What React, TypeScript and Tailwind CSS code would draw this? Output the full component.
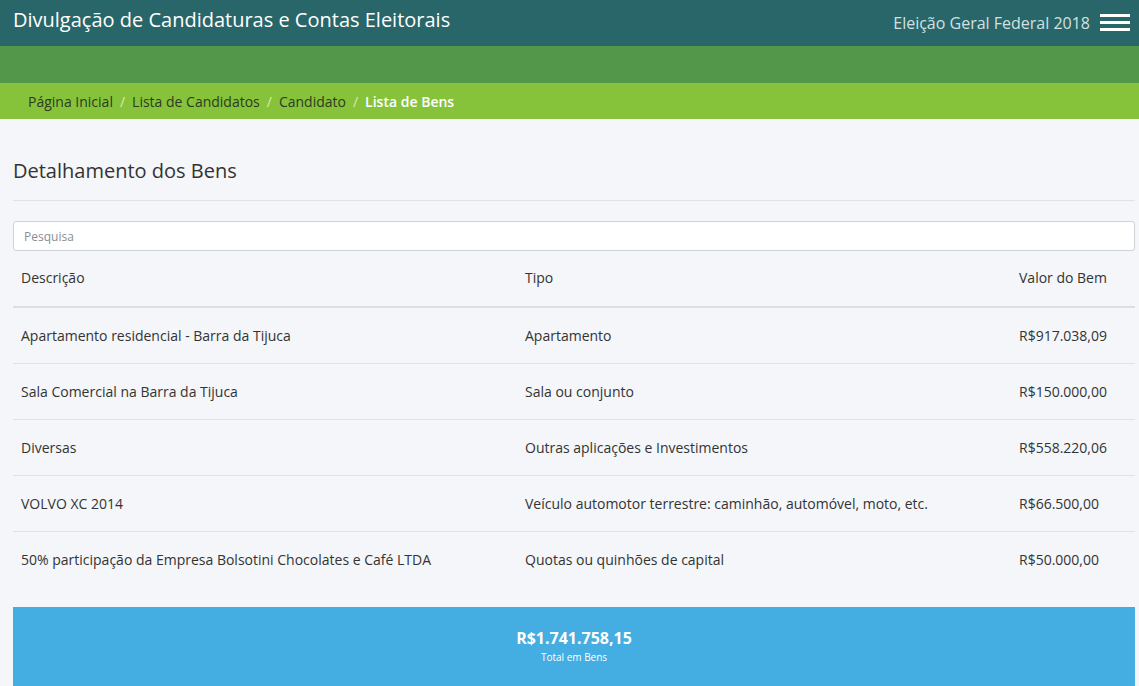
const bens = [
  { descricao: "Apartamento residencial - Barra da Tijuca", tipo: "Apartamento", valor: "R$917.038,09" },
  { descricao: "Sala Comercial na Barra da Tijuca", tipo: "Sala ou conjunto", valor: "R$150.000,00" },
  { descricao: "Diversas", tipo: "Outras aplicações e Investimentos", valor: "R$558.220,06" },
  { descricao: "VOLVO XC 2014", tipo: "Veículo automotor terrestre: caminhão, automóvel, moto, etc.", valor: "R$66.500,00" },
  { descricao: "50% participação da Empresa Bolsotini Chocolates e Café LTDA", tipo: "Quotas ou quinhões de capital", valor: "R$50.000,00" },
];

export default function App() {
  return (
    <div className="min-h-[686px] bg-[#f4f6f9] font-['Open_Sans',sans-serif] text-[#333]">
      {/* Top bar */}
      <header className="h-[46px] bg-[#28666a] flex items-center justify-between pl-[13px] pr-[9px]">
        <h1 className="text-[20px] text-white leading-none -mt-[6px]">
          Divulgação de Candidaturas e Contas Eleitorais
        </h1>
        <div className="flex items-center gap-[10px]">
          <span className="text-[16px] text-[#d3e0e0]">Eleição Geral Federal 2018</span>
          <div className="flex flex-col gap-[4px] -mt-[2px]">
            <span className="block w-[30px] h-[3px] bg-white" />
            <span className="block w-[30px] h-[3px] bg-white" />
            <span className="block w-[30px] h-[3px] bg-white" />
          </div>
        </div>
      </header>
      <div className="h-[37px] bg-[#52974a]" />

      {/* Breadcrumb */}
      <nav className="h-[36px] bg-[#86c33a] flex items-center pl-[28px] text-[14px]">
        <span className="text-[#2d3b21]">Página Inicial</span>
        <span className="px-[7px] text-[#d6eda8]">/</span>
        <span className="text-[#2d3b21]">Lista de Candidatos</span>
        <span className="px-[7px] text-[#d6eda8]">/</span>
        <span className="text-[#2d3b21]">Candidato</span>
        <span className="px-[7px] text-[#d6eda8]">/</span>
        <span className="text-white font-semibold">Lista de Bens</span>
      </nav>

      {/* Content */}
      <main className="px-[13px] pr-[4px]">
        <h2 className="pt-[37px] pb-[14px] text-[20px] text-[#333] border-b border-[#dfe3e7]">
          Detalhamento dos Bens
        </h2>
        <input
          placeholder="Pesquisa"
          className="mt-[20px] w-full h-[30px] rounded-[3px] border border-[#cfd3d7] bg-white px-[10px] text-[12px] placeholder:text-[#8a8f94] outline-none"
        />
        <table className="w-full text-[14px] border-collapse">
          <thead>
            <tr className="border-b-2 border-[#dcdfe2]">
              <th className="w-[504px] text-left font-normal px-[8px] pt-[16px] pb-[18px]">Descrição</th>
              <th className="text-left font-normal px-[8px] pt-[16px] pb-[18px]">Tipo</th>
              <th className="w-[124px] text-left font-normal px-[8px] pt-[16px] pb-[18px]">Valor do Bem</th>
            </tr>
          </thead>
          <tbody>
            {bens.map((b, i) => (
              <tr key={i} className={i < bens.length - 1 ? "border-b border-[#dfe3e7]" : ""}>
                <td className="h-[56px] px-[8px]">{b.descricao}</td>
                <td className="h-[56px] px-[8px]">{b.tipo}</td>
                <td className="h-[56px] px-[8px]">{b.valor}</td>
              </tr>
            ))}
          </tbody>
        </table>

        <div className="mt-[20px] h-[90px] bg-[#44ade2] flex flex-col items-center pt-[20px] text-white">
          <span className="text-[16px] font-bold leading-[22px]">R$1.741.758,15</span>
          <span className="text-[10px] leading-[16px]">Total em Bens</span>
        </div>
      </main>
    </div>
  );
}
